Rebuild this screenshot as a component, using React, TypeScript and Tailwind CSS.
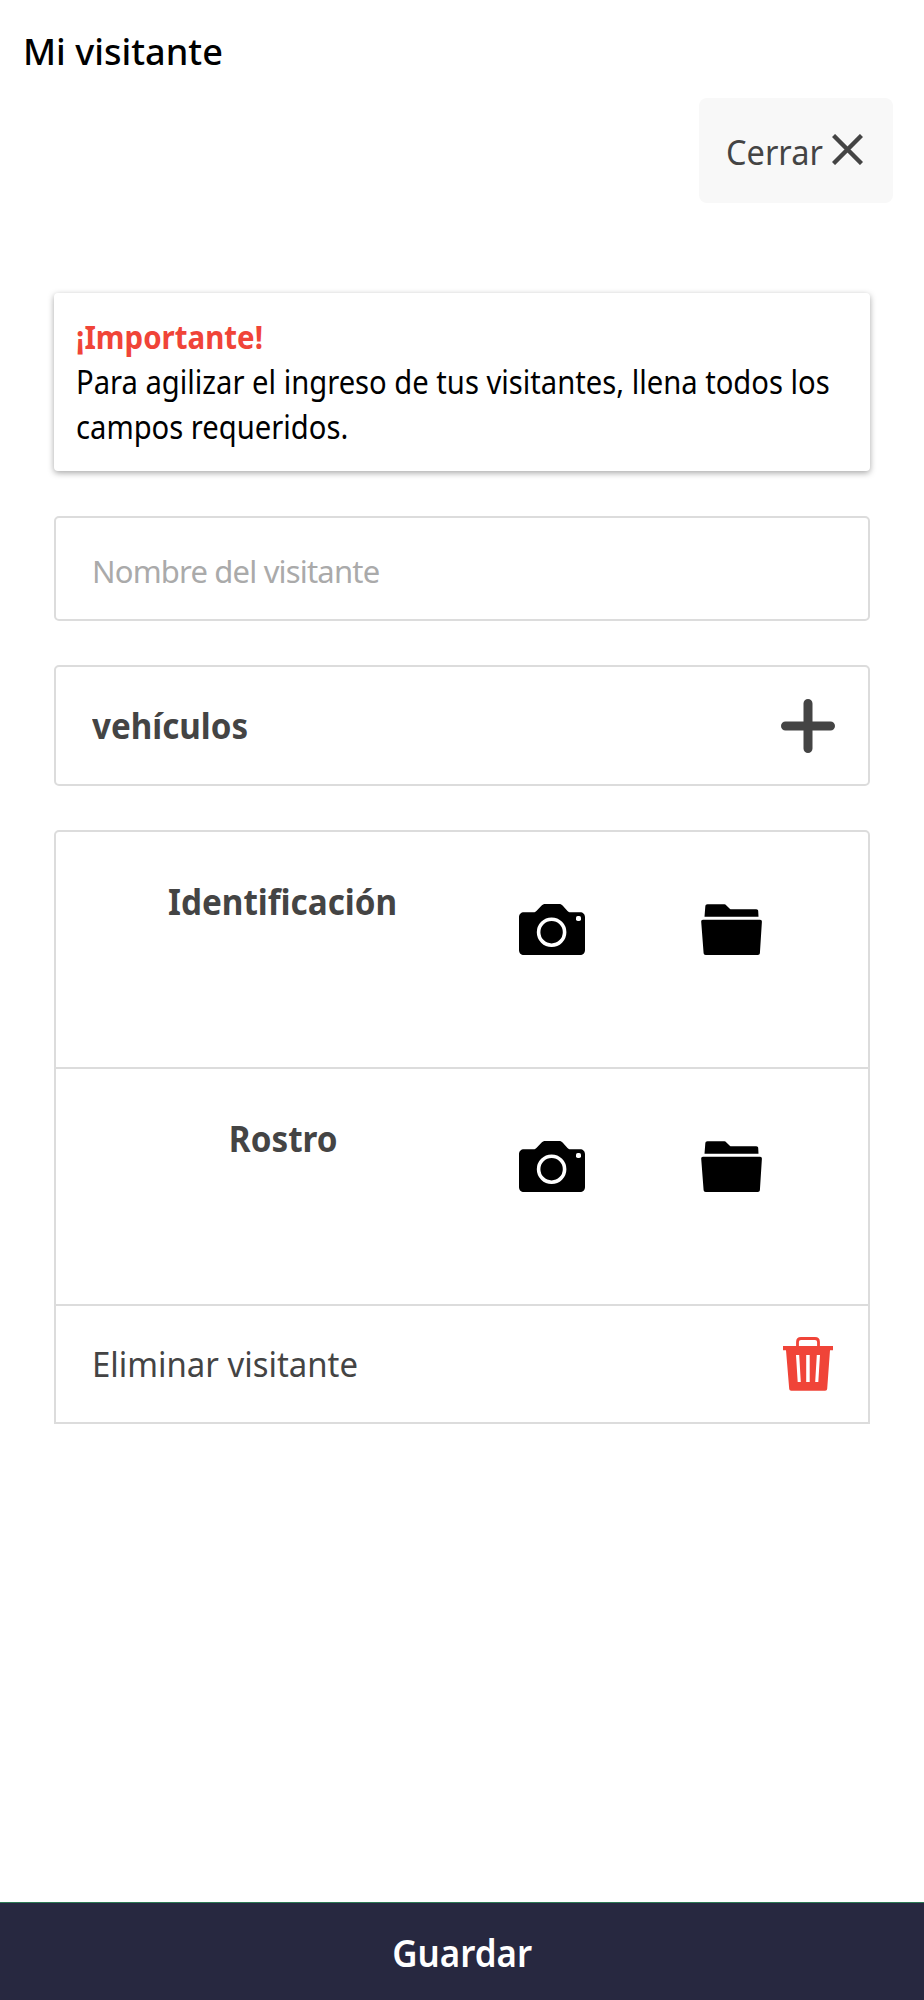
import React from 'react';

interface IconProps {
  className?: string;
}

const CloseIcon: React.FC<IconProps> = ({ className }) => (
  <svg viewBox="0 0 31 31" className={className} stroke="currentColor" strokeWidth="4.4" fill="none">
    <path d="M1.5 1.5 29.5 29.5M29.5 1.5 1.5 29.5" />
  </svg>
);

const PlusIcon: React.FC<IconProps> = ({ className }) => (
  <svg viewBox="0 0 54 54" className={className} stroke="currentColor" strokeWidth="9" strokeLinecap="round">
    <path d="M27 4.5v45M4.5 27h45" />
  </svg>
);

const CameraIcon: React.FC<IconProps> = ({ className }) => (
  <svg viewBox="0 0 66 51" className={className}>
    <path
      fill="currentColor"
      d="M5 8.3h9.5c1.3 0 2-.4 2.9-1.3l5-5.2C23.6.6 24.6 0 26.2 0h13.9c1.6 0 2.6.6 3.7 1.8l4.7 5.2c.9.9 1.6 1.3 2.9 1.3H61c3 0 5 2 5 5V46c0 3-2 5-5 5H5c-3 0-5-2-5-5V13.3c0-3 2-5 5-5z"
    />
    <circle cx="32.6" cy="28.2" r="13" fill="none" stroke="white" strokeWidth="3.6" />
    <rect x="57" y="12" width="5" height="5" rx="1.8" fill="white" />
  </svg>
);

const FolderIcon: React.FC<IconProps> = ({ className }) => (
  <svg viewBox="0 0 61 51" className={className} fill="currentColor">
    <path d="M3.5 12.8 4.3 2.5C4.4 1 5.2.3 6.5.3h16.2c1.2 0 1.9.3 2.7 1.1l3.4 3.3c.4.4.8.5 1.4.5h25c1.3 0 1.9.7 2 1.8l.3 5.8z" />
    <path d="M2 15.7h57c1.3 0 2 .8 1.9 2L58.900 49c-.1 1.300-.9 2-2.100 2H4.700c-1.300 0-2-.7-2.100-2L.2 17.700c-.1-1.200.6-2 1.800-2z" />
  </svg>
);

const TrashIcon: React.FC<IconProps> = ({ className }) => (
  <svg viewBox="0 0 50 54" className={className}>
    <path d="M14.5 10V5c0-2.2 1.2-3.5 3.5-3.5h14c2.3 0 3.500 1.300 3.500 3.500v5" fill="none" stroke="currentColor" strokeWidth="2.8" />
    <path fill="currentColor" d="M0 9h50v4.300h-3L44.200 51.800c-.1 1.300-.9 1.900-2.100 1.900H8.300c-1.200 0-2-.6-2.100-1.900L3 13.300H0z" />
    <path fill="white" d="M13 18h3.200l1.600 27h-3.100zM23.200 18h3.500v27h-3.500zM33.800 18H37l-1.700 27h-3.100z" />
  </svg>
);

const PhotoRow: React.FC<{ label: string }> = ({ label }) => (
  <div className="flex h-[237px] border-b-2 border-[#dcdcdc]">
    <div className="ml-[54px] w-[346px] pt-[45px] text-center text-[35px] leading-[50px] font-bold">
      <span className="inline-block scale-x-[.95]">{label}</span>
    </div>
    <button className="mt-[72px] ml-[63px] h-[51px] w-[66px] text-black">
      <CameraIcon className="h-full w-full" />
    </button>
    <button className="mt-[72px] ml-[116px] h-[51px] w-[61px] text-black">
      <FolderIcon className="h-full w-full" />
    </button>
  </div>
);

export default function App() {
  return (
    <div className="flex h-[2000px] w-full flex-col bg-white font-['Noto_Sans',sans-serif] text-[#444444]">
      <h1 className="h-[98px] pl-[23px] text-[37px] leading-[102px] font-medium text-black">
        <span className="inline-block origin-left scale-x-[.975]">Mi visitante</span>
      </h1>

      <button className="mr-[31px] flex h-[105px] w-[194px] items-center self-end rounded-lg bg-[#f8f8f8] pt-[2px] pl-[27px] text-[35px]">
        <span className="w-[106px] origin-left scale-x-[.93] text-left leading-[50px]">Cerrar</span>
        <CloseIcon className="mb-[4px] h-[31px] w-[31px] shrink-0" />
      </button>

      <main className="mt-[90px] flex flex-1 flex-col px-[54px]">
        <div className="h-[178px] rounded bg-white pt-[22px] pl-[22px] text-[32px] leading-[44.8px] whitespace-nowrap text-black shadow-[0_2px_6px_rgba(0,0,0,0.35)]">
          <p className="w-max origin-left scale-x-[.92] font-bold text-[#f04438]">¡Importante!</p>
          <p className="w-max origin-left scale-x-[.912]">
            Para agilizar el ingreso de tus visitantes, llena todos los
            <br />
            campos requeridos.
          </p>
        </div>

        <input
          type="text"
          placeholder="Nombre del visitante"
          className="mt-[45px] h-[105px] rounded-[5px] border-2 border-[#dcdcdc] pt-[4px] pl-[36px] text-[31px] tracking-[-0.82px] outline-none placeholder:text-[#aaaaaa]"
        />

        <div className="mt-[44px] flex h-[121px] items-center justify-between rounded-[5px] border-2 border-[#dcdcdc] pr-[33px] pl-[36px]">
          <span className="origin-left scale-x-[.947] pt-px text-[35px] font-bold">vehículos</span>
          <PlusIcon className="h-[54px] w-[54px]" />
        </div>

        <div className="mt-[44px] rounded-t-[5px] border-2 border-[#dcdcdc]">
          <PhotoRow label="Identificación" />
          <PhotoRow label="Rostro" />
          <div className="flex h-[116px] items-center justify-between pr-[35px] pl-[36px]">
            <span className="origin-left scale-x-[.94] text-[35px]">Eliminar visitante</span>
            <TrashIcon className="h-[54px] w-[50px] text-[#f04438]" />
          </div>
        </div>
      </main>

      <button className="h-[98px] w-full border-t border-[#2d7a55] bg-[#272840] pt-px text-[38px] font-semibold text-white">
        <span className="inline-block scale-x-[.918]">Guardar</span>
      </button>
    </div>
  );
}
